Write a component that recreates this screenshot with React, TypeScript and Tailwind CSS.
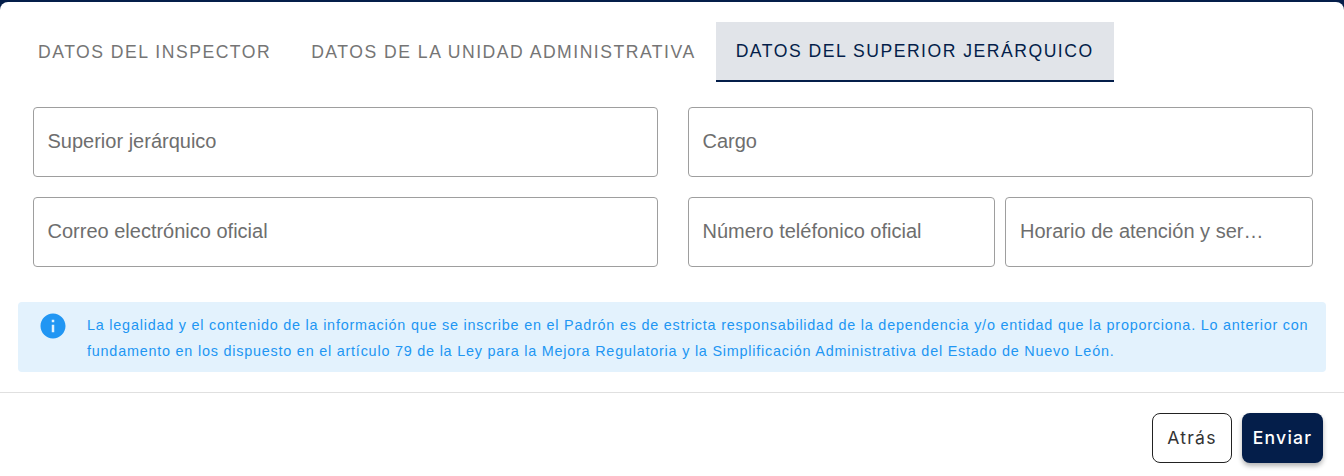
import React from 'react';

const Field = ({ label, narrow }: { label: string; narrow?: boolean }) => (
  <div className={narrow ? 'h-[70px] min-w-0 flex items-center pl-[14px] pr-[46px] pb-[2px] bg-white border border-[#9e9e9e] rounded-[4px]' : 'h-[70px] min-w-0 flex-1 flex items-center pl-[13.5px] pr-[14px] pb-[2px] bg-white border border-[#9e9e9e] rounded-[4px]'}>
    <span className="text-[20px] text-[#6e6e6e] truncate">{label}</span>
  </div>
);

const tabs = ['DATOS DEL INSPECTOR', 'DATOS DE LA UNIDAD ADMINISTRATIVA'];

export default function App() {
  return (
    <div className="w-[1344px] h-[476px] overflow-hidden bg-[#041e4a] pt-[2px] font-['Liberation_Sans',sans-serif]">
      <div className="h-[474px] bg-white rounded-t-[8px] flex flex-col">
        {/* Tabs */}
        <div className="flex items-stretch h-[60px] mt-[20px] pl-[18px]">
          {tabs.map((t) => (
            <div key={t} className="px-5 flex items-center text-[17.6px] tracking-[1.5px] text-[#757575] whitespace-nowrap">
              {t}
            </div>
          ))}
          <div className="px-5 flex items-center text-[17.6px] tracking-[1.5px] text-[#041e4a] whitespace-nowrap bg-[#e1e4e9] border-b-2 border-[#041e4a]">
            DATOS DEL SUPERIOR JERÁRQUICO
          </div>
        </div>

        {/* Form */}
        <div className="pl-[33px] pr-[31px] pt-[25px] flex flex-col gap-5">
          <div className="grid grid-cols-2 gap-[30px]">
            <div className="flex min-w-0"><Field label="Superior jerárquico" /></div>
            <div className="flex min-w-0"><Field label="Cargo" /></div>
          </div>
          <div className="grid grid-cols-2 gap-[30px]">
            <div className="flex min-w-0"><Field label="Correo electrónico oficial" /></div>
            <div className="grid grid-cols-[307px_1fr] gap-[10px] min-w-0">
              <Field label="Número teléfonico oficial" />
              <Field narrow label="Horario de atención y servicio" />
            </div>
          </div>
        </div>

        {/* Alert */}
        <div className="mx-[18px] mt-[35px] h-[70px] bg-[#e3f2fd] rounded-[4px] flex pl-[22px] pr-2">
          <svg viewBox="0 0 24 24" className="w-[30px] h-[30px] -ml-[2px] mt-[9px] shrink-0 fill-[#2196f3]">
            <path d="M12 2C6.48 2 2 6.48 2 12s4.48 10 10 10 10-4.48 10-10S17.52 2 12 2zm1 15h-2v-6h2v6zm0-8h-2V7h2v2z" />
          </svg>
          <p className="ml-[19px] pt-[10px] text-[14.4px] leading-[26px] tracking-[0.78px] text-[#2196f3]">
            La legalidad y el contenido de la información que se inscribe en el Padrón es de estricta responsabilidad de la dependencia y/o entidad que la proporciona. Lo anterior con fundamento en los dispuesto en el artículo 79 de la Ley para la Mejora Regulatoria y la Simplificación Administrativa del Estado de Nuevo León.
          </p>
        </div>

        {/* Footer */}
        <div className="mt-5 border-t border-[#e0e0e0] flex justify-end gap-[10px] pt-5 pr-[21px]">
          <button className="w-20 h-[50px] rounded-lg border border-[#222222] bg-white text-[17.6px] tracking-[1.2px] text-[#333333] font-['Inter',sans-serif]">
            Atrás
          </button>
          <button className="w-[81px] h-[50px] rounded-lg bg-[#041e4a] text-[17.6px] font-medium tracking-[1.2px] text-white shadow-[0_3px_5px_rgba(0,0,0,0.3)] font-['Inter',sans-serif]">
            Enviar
          </button>
        </div>
      </div>
    </div>
  );
}
